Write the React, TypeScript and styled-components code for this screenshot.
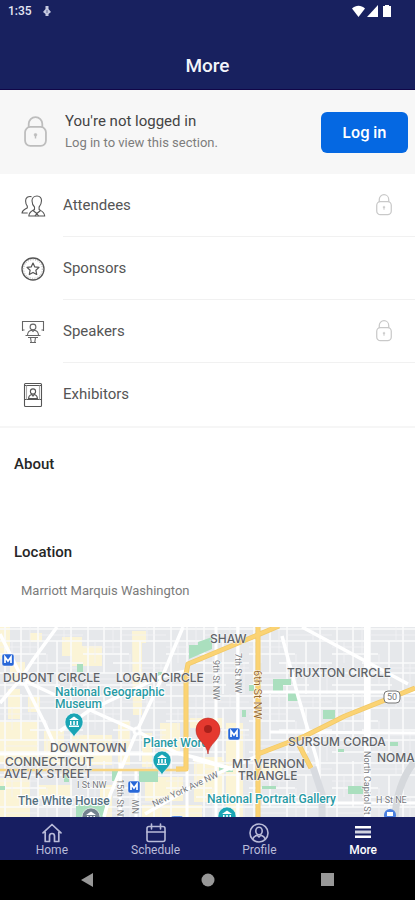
import React from 'react';
import styled, { createGlobalStyle } from 'styled-components';

const GlobalStyle = createGlobalStyle`
  *, *::before, *::after { box-sizing: border-box; }
  html, body { margin: 0; padding: 0; background: #fff; }
  body, button { font-family: Roboto, "Liberation Sans", sans-serif; }
`;

const Screen = styled.div`
  display: flex;
  flex-direction: column;
  min-height: 100vh;
  background: #fff;
`;

const StatusBar = styled.div`
  display: flex;
  align-items: center;
  justify-content: space-between;
  height: 22px;
  padding: 0 22px 0 8px;
  color: #e6e8f4;
  font-size: 12px;
  font-weight: 500;
`;

const StatusGroup = styled.div<{ $gap: number }>`
  display: flex;
  align-items: center;
  gap: ${(p) => p.$gap}px;
`;

const Header = styled.header`
  background: #18215f;
  border-bottom: 1px solid #110648;
`;

const Title = styled.h1`
  margin: 0;
  padding: 32px 0 11px;
  color: #f3f4fa;
  font-size: 19px;
  font-weight: 500;
  line-height: 24px;
  text-align: center;
`;

const Main = styled.main`
  display: flex;
  flex: 1;
  flex-direction: column;
`;

const LoginPanel = styled.section`
  display: flex;
  align-items: center;
  height: 84px;
  padding: 0 7px 0 24px;
  background: #f7f7f7;
`;

const LoginText = styled.div`
  flex: 1;
  padding-left: 18px;
`;

const LoginTitle = styled.p`
  margin: 0;
  color: #444;
  font-size: 15px;
  line-height: 22px;
`;

const LoginHint = styled.p`
  margin: 0;
  color: #7d7d7d;
  font-size: 13px;
  line-height: 22px;
`;

const LoginButton = styled.button`
  width: 87px;
  height: 41px;
  padding: 0;
  border: 0;
  border-radius: 6px;
  background: #0568e2;
  color: #fff;
  font-family: Inter, sans-serif;
  font-size: 15px;
  font-weight: 600;
  cursor: pointer;
`;

const Menu = styled.ul`
  margin: 0;
  padding: 0;
  list-style: none;
  border-bottom: 2px solid #f6f6f6;
`;

const MenuItem = styled.li`
  display: flex;
  height: 63px;
`;

const MenuButton = styled.button`
  display: flex;
  flex: 1;
  align-items: stretch;
  padding: 0;
  border: 0;
  background: none;
  color: #555;
  font-size: 15px;
  text-align: left;
  cursor: pointer;
`;

const MenuIcon = styled.span`
  display: flex;
  align-items: center;
  width: 63px;
  padding-left: 20px;
`;

const MenuLabel = styled.span<{ $divided: boolean }>`
  display: flex;
  flex: 1;
  align-items: center;
  justify-content: space-between;
  padding-right: 23px;
  border-bottom: 1px solid ${(p) => (p.$divided ? '#f1f1f1' : 'transparent')};
`;

const AboutSection = styled.section`
  height: 88px;
  padding: 25px 14px 0;
`;

const LocationSection = styled.section`
  padding: 25px 14px 0;
`;

const SectionTitle = styled.h2`
  margin: 0;
  color: #262626;
  font-size: 15px;
  font-weight: 500;
  line-height: 22px;
`;

const Venue = styled.p`
  margin: 0;
  padding: 17px 7px 25px;
  color: #7b7b7b;
  font-size: 13px;
  line-height: 22px;
`;

const MapFrame = styled.div`
  display: flex;
  flex: 1;
  min-height: 188px;
  background: #e8eaed;
`;

const MapDrawing = styled.svg`
  display: block;
  flex: 1;
  width: 100%;
  height: 190px;
  font-family: Roboto, sans-serif;
`;

const TabBar = styled.nav`
  display: grid;
  grid-template-columns: repeat(4, 1fr);
  height: 43px;
  background: #171e61;
`;

const Tab = styled.button<{ $active: boolean }>`
  display: flex;
  flex-direction: column;
  align-items: center;
  padding: 6px 0 0;
  border: 0;
  background: none;
  color: ${(p) => (p.$active ? '#ffffff' : '#b9bbd8')};
  font-size: 12px;
  font-weight: ${(p) => (p.$active ? 500 : 400)};
  line-height: 14px;
  cursor: pointer;
`;

const SystemBar = styled.div`
  display: grid;
  grid-template-columns: repeat(3, 120px);
  justify-content: center;
  height: 40px;
  background: #000;
`;

const SystemButton = styled.button`
  display: flex;
  align-items: center;
  justify-content: center;
  padding: 0;
  border: 0;
  background: none;
  color: #989898;
  cursor: pointer;
`;

const LockIcon = ({ width, color }: { width: number; color: string }) => (
  <svg width={width} height={(width * 30) / 22} viewBox="0 0 22 30" fill="none" stroke={color} strokeWidth="1.7" aria-hidden="true">
    <rect x="1" y="10.5" width="20" height="18" rx="5" />
    <path d="M4.500 11V7.500a6.500 6.500 0 0 1 13 0V11" />
    <circle cx="11" cy="18" r="1.300" fill={color} strokeWidth="0.600" />
    <path d="M11 18v3.500" strokeWidth="1.400" />
  </svg>
);

const AttendeesIcon = () => (
  <svg width="26" height="24" viewBox="0 0 26 24" fill="none" stroke="#555" strokeWidth="1.1" strokeLinejoin="round" aria-hidden="true">
    <path d="M17 2c3 0 4.600 2 4.500 4.800-.1 2.900-1.200 5-2.400 6.200v2.500c1.500 1.300 5 1.500 5.600 6.500H8.800c.6-5 4.100-5.200 5.700-6.500V13c-1.400-1.200-2.400-3.300-2.500-6.200C12 4 14 2 17 2z" />
    <path d="M13 16.500l3.800 3 3.800-3M15 22l1.800-2.500 1.800 2.500" />
    <path d="M11.500 2.600C8 2 5.600 3.600 5.600 7c0 2.400.8 4 1.700 5.200v1.700c-1.400 1.200-4.700 1.200-5.300 5.100h5.700" />
  </svg>
);

const SponsorsIcon = () => (
  <svg width="26" height="26" viewBox="0 0 26 26" fill="none" stroke="#555" strokeLinejoin="round" aria-hidden="true">
    <circle cx="13" cy="13" r="11" strokeWidth="1.300" />
    <circle cx="13" cy="13" r="9.300" strokeWidth="0.500" strokeDasharray="1 1.400" />
    <path d="M13 7l1.800 3.900 4.200.5-3.100 2.900.8 4.200-3.700-2.100-3.700 2.100.8-4.200L7 11.400l4.200-.5z" strokeWidth="1.200" />
  </svg>
);

const SpeakersIcon = () => (
  <svg width="26" height="26" viewBox="0 0 26 26" fill="none" stroke="#666" strokeWidth="1.1" aria-hidden="true">
    <path d="M2.500 12V2.500h21V12M2.500 11h2M21.500 11h2" />
    <circle cx="13" cy="8" r="2.900" />
    <path d="M7.500 16c.3-3.500 2-4.500 4.200-4.800L13 12.500l1.300-1.300c2.200.3 3.900 1.300 4.200 4.800" />
    <path d="M5.500 16.500h15M8 18.500h10M10.500 18.500l.8 5h3.400l.8-5M10 23.500h6" />
  </svg>
);

const ExhibitorsIcon = () => (
  <svg width="26" height="26" viewBox="0 0 26 26" fill="none" stroke="#555" strokeWidth="1.100" aria-hidden="true">
    <rect x="4.500" y="1.500" width="17" height="23" rx="1" />
    <path d="M4.500 3.500h17M4.500 17.500h17" />
    <path d="M6.500 3.500v14M19.500 3.500v14" stroke="#aaa" />
    <circle cx="13" cy="9.500" r="2.600" />
    <path d="M8.500 16.500c.3-2.700 1.700-3.700 3.300-4L13 14l1.200-1.500c1.600.3 3 1.300 3.300 4z" />
  </svg>
);

const HomeIcon = () => (
  <svg width="22" height="20" viewBox="0 0 22 20" fill="none" stroke="currentColor" strokeWidth="1.700" strokeLinejoin="round" strokeLinecap="round" aria-hidden="true">
    <path d="M2 9.800L11 1.500l9 8.300M4.200 8.800v9.700h4.300v-5.500a2.500 2.500 0 0 1 5 0v5.500h4.300V8.800" />
  </svg>
);

const ScheduleIcon = () => (
  <svg width="22" height="20" viewBox="0 0 22 20" fill="none" stroke="currentColor" strokeWidth="1.600" strokeLinecap="round" aria-hidden="true">
    <rect x="2" y="3.500" width="18" height="15" rx="2" />
    <path d="M2 9h18M6.500 1v5M15.500 1v5" />
  </svg>
);

const ProfileIcon = () => (
  <svg width="22" height="20" viewBox="0 0 22 20" fill="none" stroke="currentColor" strokeWidth="1.600" aria-hidden="true">
    <circle cx="11" cy="10" r="9" />
    <ellipse cx="11" cy="8" rx="3.200" ry="3.700" />
    <path d="M4.800 16c.6-2.300 2-3.100 4.300-3.800L11 14l1.900-1.800c2.300.7 3.700 1.500 4.300 3.800" />
  </svg>
);

const MoreIcon = () => (
  <svg width="22" height="20" viewBox="0 0 22 20" fill="currentColor" aria-hidden="true">
    <path d="M3 3h16v2.500H3zM3 12.500h16V15H3z" />
    <path d="M3 7.500h16v3H3z" opacity="0.800" />
  </svg>
);

const menuItems = [
  { label: 'Attendees', Icon: AttendeesIcon, locked: true },
  { label: 'Sponsors', Icon: SponsorsIcon, locked: false },
  { label: 'Speakers', Icon: SpeakersIcon, locked: true },
  { label: 'Exhibitors', Icon: ExhibitorsIcon, locked: false },
];

const tabs = [
  { label: 'Home', Icon: HomeIcon },
  { label: 'Schedule', Icon: ScheduleIcon },
  { label: 'Profile', Icon: ProfileIcon },
  { label: 'More', Icon: MoreIcon },
];

const District = styled.text`
  fill: #606368;
  stroke: #f6f7f8;
  stroke-width: 1px;
  paint-order: stroke;
  font-family: Inter, sans-serif;
  font-size: 12px;
  font-weight: 500;
`;

const Landmark = styled.text<{ $muted?: boolean }>`
  fill: ${(p) => (p.$muted ? '#54707f' : '#279aa4')};
  stroke: #fff;
  stroke-width: 2px;
  paint-order: stroke;
  font-size: 12px;
  font-weight: 500;
`;

const Street = styled.text<{ $major?: boolean }>`
  fill: ${(p) => (p.$major ? '#9a6a2c' : '#76797d')};
  stroke: #fff;
  stroke-width: 1px;
  paint-order: stroke;
  font-size: 9px;
`;

const MajorStreet = styled(Street)`
  font-size: 11px;
`;

const MetroBadge = ({ x, y }: { x: number; y: number }) => (
  <g transform={`translate(${x} ${y})`}>
    <rect x="-6" y="-6" width="12" height="12" rx="2" fill="#2767d8" stroke="#fff" strokeWidth="0.500" />
    <path d="M-3 3v-6l3 4 3-4v6" fill="none" stroke="#fff" strokeWidth="1.700" />
  </g>
);

const MuseumPin = ({ x, y, color }: { x: number; y: number; color: string }) => (
  <g transform={`translate(${x} ${y})`}>
    <path d="M0 15C-2 10-9 7-9 0a9 9 0 0 1 18 0c0 7-7 10-9 15z" fill={color} stroke="#fff" strokeWidth="0.600" />
    <path d="M-5-2L0-5.500 5-2zM-4-1h1.500v4H-4zM-.8-1h1.600v4H-.8zM2.500-1H4v4H2.500zM-5 3.500H5V5H-5z" fill="#fff" />
  </g>
);

const CityMap = () => (
  <MapDrawing viewBox="0 0 415 190" preserveAspectRatio="xMidYMid slice" role="img" aria-label="Map of Marriott Marquis Washington">
    <defs>
      <pattern id="streets" width="83" height="67" patternUnits="userSpaceOnUse">
        <path d="M0 2h83M0 14h83M0 27h46M30 36h53M0 46h83M0 58h60M5 0v67M21 0v46M38 0v67M57 14v53M71 0v67" stroke="#fafbfb" strokeWidth="1.600" />
        <path d="M0 20h38M38 8h45M5 52h33M57 41h26M12 14v22M30 0v27M47 27v31M64 0v14M78 36v31" stroke="#f2f3f5" strokeWidth="0.800" />
      </pattern>
    </defs>
    <rect width="415" height="190" fill="#e6e8eb" />
    <path d="M0 0h10v32H0zM30 6h12v9H30zM62 10h20v9h20v20H72V29H62zM132 4h14v12h-4v72h-9zM10 35h15v20H10zM8 62h12v30H8zM28 70h12v15H28zM0 95h38v42H0zM44 104h20v34H44zM70 108h42v30H70zM118 94h12v44h-12zM142 106h10v34h-10zM160 96h20v28h-20zM0 151h30v39H0zM38 158h34v14H38zM100 158h12v32h-12zM145 150h38v24h-38zM190 91h34v10h-34zM194 130h30v45h-30zM226 96h17v94h-17zM262 135h20v16h-20zM142 178h60v12h-60z" fill="#fbf4d6" />
    <rect width="415" height="190" fill="url(#streets)" />
    <path d="M189 18h9v-3l14-5v12l-23 10zM77 37h6v8h-6zM158 45h6v9h-6zM273 52h18v6h-8v6h-10zM288 66h10v8h-10zM323 83h12v9h-12zM249 58h5v6h-5zM242 83h4v7h-4zM112 143h6v11h-6zM139 144h19v11h-19zM64 146h5v9h-5zM76 177h29v13H76zM219 139h14v6h-14zM348 159h15v8h-15zM390 115h8v4h-8zM338 122h6v3h-6zM262 159h14v3h-14zM0 159h5v4H0z" fill="#aadfbe" />
    <g fill="none" stroke="#fff" strokeWidth="3.500">
      <path d="M0 7l23 46 22 44 12 27M57 0L33 33l-13 20L0 76M23 53l32 15M183 0l-23 55-23 49-27 64-6 22M90 83l70-33 26-6M90 83l47 21 40 22 20 5 35 11M90 83L60 104M282 9l16 60 7 24 12 40 5 57" />
      <path d="M302 0l106 57M145 187l62-36 53-23M193 132l40 10" />
      <path d="M367 0v190" strokeWidth="6" />
      <path d="M216 0v190M238 0v190M187 142v48M120 136v54M136 143v47M0 127h180M262 176h153M270 105l145 1M260 65h155" strokeWidth="3" />
      <path d="M322 190v-23l-9-27" stroke="#d8dbe0" strokeWidth="7" />
      <path d="M415 134q-18 22-20 56" stroke="#d5d8dc" strokeWidth="7" />
      <circle cx="23" cy="53" r="4" fill="#e6e8eb" strokeWidth="3" />
      <circle cx="137" cy="104" r="3" fill="#e6e8eb" strokeWidth="3" />
    </g>
    <g fill="none" stroke="#f1c967" strokeWidth="5" strokeLinejoin="round">
      <path d="M0 143h180" strokeWidth="2.500" stroke="#f8d582" />
      <path d="M279-1l-91 38-2 10v95h-10M258 0v190M415 61l-70 28-40 20-47 18M299 118l12 23" />
    </g>
    <g fill="none" stroke="#fbd374" strokeWidth="3.500">
      <path d="M279-1l-91 38-2 10v95h-10M258 0v190M415 61l-70 28-40 20-47 18M299 118l12 23" />
    </g>
    <g transform="translate(392 70)">
      <rect x="-8" y="-6" width="16" height="12" rx="4" fill="#fff" stroke="#777" />
      <Street x="-5" y="3">50</Street>
    </g>
    <Street transform="translate(213 33) rotate(90)">9th St NW</Street>
    <Street transform="translate(235 26) rotate(90)">7th St NW</Street>
    <MajorStreet $major transform="translate(254 43) rotate(90)">6th St NW</MajorStreet>
    <Street transform="translate(364 124) rotate(90)">North Capitol St</Street>
    <Street transform="translate(117 152) rotate(90)">15th St NW</Street>
    <Street transform="translate(139 187) rotate(-90)">NW</Street>
    <Street transform="translate(154 180) rotate(-25)">New York Ave NW</Street>
    <Street x="77" y="161">I St NW</Street>
    <Street x="376" y="176">H St NE</Street>
    <District x="210" y="16">SHAW</District>
    <District x="3" y="55">DUPONT CIRCLE</District>
    <District x="116" y="55">LOGAN CIRCLE</District>
    <District x="287" y="50">TRUXTON CIRCLE</District>
    <District x="50" y="125">DOWNTOWN</District>
    <District x="5" y="139">CONNECTICUT</District>
    <District x="4" y="151">AVE/ K STREET</District>
    <District x="288" y="119">SURSUM CORDA</District>
    <District x="377" y="135">NOMA</District>
    <District x="232" y="141">MT VERNON</District>
    <District x="238" y="153">TRIANGLE</District>
    <Landmark x="55" y="69">National Geographic</Landmark>
    <Landmark x="55" y="81">Museum</Landmark>
    <Landmark x="143" y="120">Planet Word</Landmark>
    <Landmark x="207" y="176">National Portrait Gallery</Landmark>
    <Landmark $muted x="18" y="178">The White House</Landmark>
    <MetroBadge x={8} y={33} />
    <MetroBadge x={134} y={160} />
    <MetroBadge x={234} y={107} />
    <MetroBadge x={177} y={195} />
    <circle cx="390" cy="188" r="6" fill="#4a7fe0" />
    <path d="M387 185h6v4h-6z" fill="#fff" />
    <MuseumPin x={74} y={95} color="#1aa5b5" />
    <MuseumPin x={162} y={133} color="#1aa5b5" />
    <MuseumPin x={227} y={189} color="#1aa5b5" />
    <MuseumPin x={91} y={190} color="#73828f" />
    <path d="M208 127c-1-11-12-13-12-24a12 12 0 0 1 24 0c0 11-11 13-12 24z" fill="#e5392f" stroke="#b92c25" strokeWidth="0.600" />
    <circle cx="208" cy="102" r="4" fill="#a9211b" />
  </MapDrawing>
);

export default function App() {
  return (
    <>
      <GlobalStyle />
      <Screen>
        <Header>
          <StatusBar>
            <StatusGroup $gap={11}>
              <span>1:35</span>
              <svg width="8" height="12" viewBox="0 0 8 12" fill="#c5c9e0" aria-hidden="true">
                <path d="M2.500 1h3v3L8 7 5.500 9v2h-3V9L0 7l2.500-3z" />
                <path d="M4 5v3" stroke="#18215f" strokeWidth="0.600" />
              </svg>
            </StatusGroup>
            <StatusGroup $gap={2}>
              <svg width="13" height="12" viewBox="0 0 13 12" fill="#fff" aria-hidden="true">
                <path d="M0 3.500C4-.3 9-.3 13 3.500L6.500 12z" />
              </svg>
              <svg width="12" height="12" viewBox="0 0 12 12" fill="#fff" aria-hidden="true">
                <path d="M11 0v12H0z" />
              </svg>
              <svg width="12" height="12" viewBox="0 0 12 12" fill="#fff" aria-hidden="true">
                <path d="M4 0h4v1h2v11H2V1h2z" />
              </svg>
            </StatusGroup>
          </StatusBar>
          <Title>More</Title>
        </Header>
        <Main>
          <LoginPanel>
            <LockIcon width={23} color="#bdbdbd" />
            <LoginText>
              <LoginTitle>You're not logged in</LoginTitle>
              <LoginHint>Log in to view this section.</LoginHint>
            </LoginText>
            <LoginButton type="button">Log in</LoginButton>
          </LoginPanel>
          <Menu>
            {menuItems.map(({ label, Icon, locked }, index) => (
              <MenuItem key={label}>
                <MenuButton type="button">
                  <MenuIcon><Icon /></MenuIcon>
                  <MenuLabel $divided={index < menuItems.length - 1}>
                    {label}
                    {locked && <LockIcon width={16} color="#c9c9c9" />}
                  </MenuLabel>
                </MenuButton>
              </MenuItem>
            ))}
          </Menu>
          <AboutSection>
            <SectionTitle>About</SectionTitle>
          </AboutSection>
          <LocationSection>
            <SectionTitle>Location</SectionTitle>
            <Venue>Marriott Marquis Washington</Venue>
          </LocationSection>
          <MapFrame>
            <CityMap />
          </MapFrame>
        </Main>
        <TabBar aria-label="Main">
          {tabs.map(({ label, Icon }) => (
            <Tab key={label} type="button" $active={label === 'More'}>
              <Icon />
              {label}
            </Tab>
          ))}
        </TabBar>
        <SystemBar>
          <SystemButton type="button" aria-label="Back">
            <svg width="14" height="14" viewBox="0 0 14 14" fill="currentColor"><path d="M12 0v14L0 7z" /></svg>
          </SystemButton>
          <SystemButton type="button" aria-label="Home screen">
            <svg width="14" height="14" viewBox="0 0 14 14" fill="currentColor"><circle cx="7" cy="7" r="6.500" /></svg>
          </SystemButton>
          <SystemButton type="button" aria-label="Recent apps">
            <svg width="14" height="14" viewBox="0 0 14 14" fill="currentColor"><path d="M0 0h13v13H0z" /></svg>
          </SystemButton>
        </SystemBar>
      </Screen>
    </>
  );
}
